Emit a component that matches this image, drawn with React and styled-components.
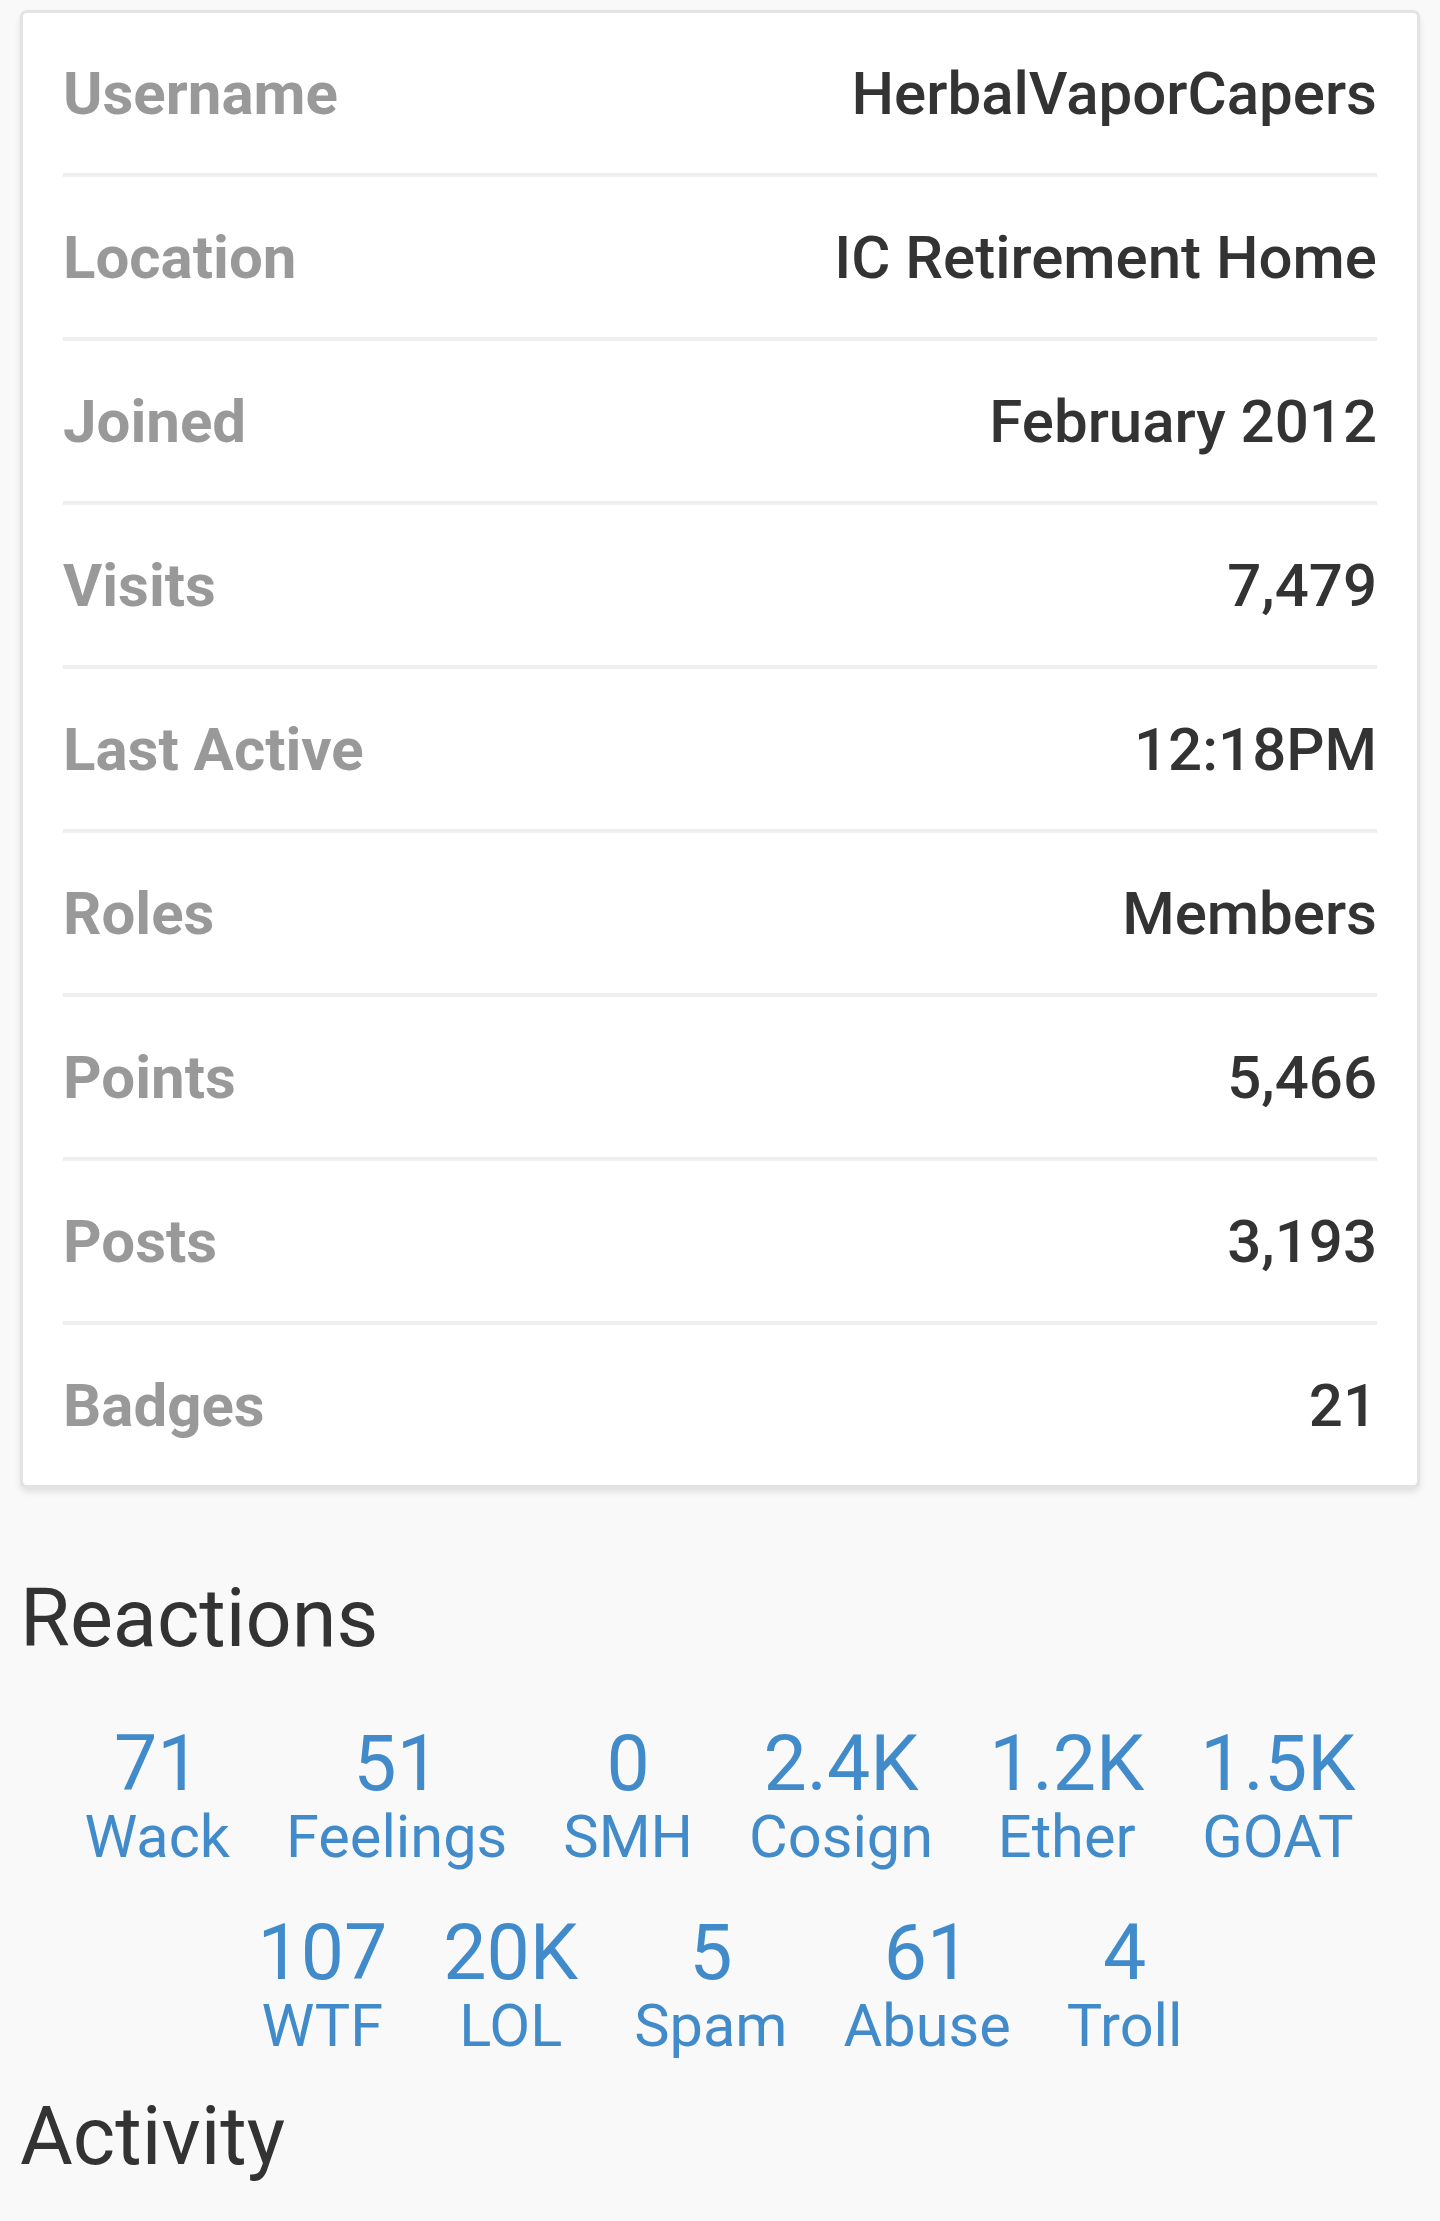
import React from 'react';
import styled, { createGlobalStyle } from 'styled-components';

const GlobalStyle = createGlobalStyle`
  body {
    margin: 0;
    background: #f9f9f9;
    font-family: Roboto, "Liberation Sans", sans-serif;
    color: #333;
  }
`

const Page = styled.div`
  padding: 10px 20px 0;
`

const InfoCard = styled.div`
  background: #fff;
  border: 3px solid #e3e3e3;
  border-radius: 7px;
  box-shadow: 0 4px 6px rgba(0, 0, 0, 0.1);
  padding: 0 40px;
`

const InfoRow = styled.div`
  height: 160px;
  display: flex;
  align-items: center;
  justify-content: space-between;
  border-bottom: ${props => props.last ? 'none' : '4px solid #efefef'};
  font-size: 60px;
`

const Label = styled.span`
  color: #999;
  font-weight: 700;
`

const Value = styled.span`
  color: #333;
  font-weight: 500;
`

const SectionTitle = styled.h2`
  margin: ${props => props.top}px 0 0;
  font-size: 81px;
  line-height: 90px;
  font-weight: 400;
  color: #333;
`

const ReactionList = styled.div`
  display: flex;
  flex-wrap: wrap;
  justify-content: center;
  row-gap: 44px;
  margin-top: 58px;
`

const Reaction = styled.a`
  margin: 0 28px;
  text-align: center;
  color: #428bca;
  text-decoration: none;
`

const Count = styled.span`
  display: block;
  font-size: 77px;
  line-height: 85px;
`

const ReactionName = styled.span`
  display: block;
  font-size: 59.5px;
  line-height: 60px;
`

const info = [
  ['Username', 'HerbalVaporCapers'],
  ['Location', 'IC Retirement Home'],
  ['Joined', 'February 2012'],
  ['Visits', '7,479'],
  ['Last Active', '12:18PM'],
  ['Roles', 'Members'],
  ['Points', '5,466'],
  ['Posts', '3,193'],
  ['Badges', '21'],
]

const reactions = [
  ['71', 'Wack'],
  ['51', 'Feelings'],
  ['0', 'SMH'],
  ['2.4K', 'Cosign'],
  ['1.2K', 'Ether'],
  ['1.5K', 'GOAT'],
  ['107', 'WTF'],
  ['20K', 'LOL'],
  ['5', 'Spam'],
  ['61', 'Abuse'],
  ['4', 'Troll'],
]

export default function App() {
  return (
    <Page>
      <GlobalStyle />
      <InfoCard>
        {info.map(([label, value], i) => (
          <InfoRow key={label} last={i === info.length - 1}>
            <Label>{label}</Label>
            <Value>{value}</Value>
          </InfoRow>
        ))}
      </InfoCard>
      <SectionTitle top={86}>Reactions</SectionTitle>
      <ReactionList>
        {reactions.map(([count, name]) => (
          <Reaction key={name} href="#">
            <Count>{count}</Count>
            <ReactionName>{name}</ReactionName>
          </Reaction>
        ))}
      </ReactionList>
      <SectionTitle top={36}>Activity</SectionTitle>
    </Page>
  );
}
